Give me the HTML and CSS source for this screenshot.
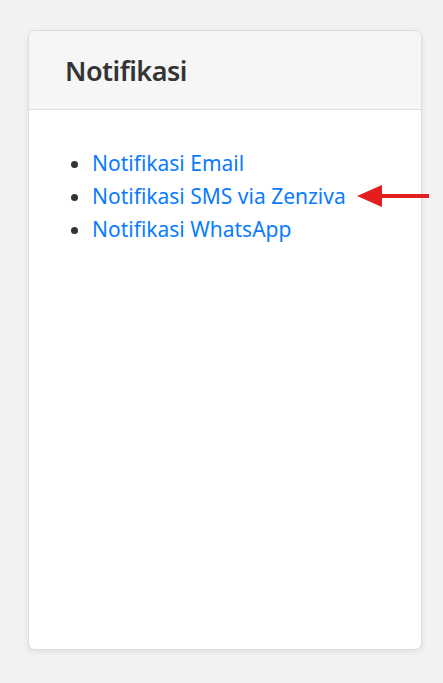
FILE: index.html
```html
<!DOCTYPE html>
<html lang="id">
<head>
<meta charset="utf-8">
<title>Notifikasi</title>
<link rel="stylesheet" href="styles.css">
</head>
<body>
<div class="page">
  <div class="card">
    <div class="card-header">
      <h3 class="card-title">Notifikasi</h3>
    </div>
    <div class="card-body">
      <ul class="links">
        <li><a href="#">Notifikasi Email</a></li>
        <li class="marked"><a href="#">Notifikasi SMS via Zenziva</a>
          <svg class="arrow" width="76" height="24" viewBox="0 0 76 24" aria-hidden="true">
            <path d="M0 12 L25 1 L25 10 L72 10 L72 14 L25 14 L25 23 Z" fill="#e41e1e"/>
          </svg>
        </li>
        <li><a href="#">Notifikasi WhatsApp</a></li>
      </ul>
    </div>
  </div>
</div>
</body>
</html>
```
FILE: styles.css
```css
html, body {
  margin: 0;
  padding: 0;
  background: #f2f2f2;
}
body {
  font-family: "Noto Sans", "Open Sans", sans-serif;
}
.page {
  padding: 30px 21px 32px 28px;
}
.card {
  height: 618px;
  background: #fff;
  border: 1px solid #dcdcdc;
  border-radius: 7px;
  box-shadow: 0 2px 6px rgba(0,0,0,0.08);
  display: flex;
  flex-direction: column;
}
.card-header {
  height: 78px;
  background: #f6f6f6;
  border-bottom: 1px solid #dddddd;
  border-radius: 7px 7px 0 0;
  display: flex;
  align-items: center;
  padding: 0 36px;
}
.card-title {
  margin: 0;
  font-size: 27px;
  font-weight: 600;
  letter-spacing: -0.5px;
  color: #343434;
}
.card-body {
  padding: 37px 0 0 0;
}
.links {
  margin: 0;
  padding-left: 63px;
  font-size: 21px;
  line-height: 33px;
  color: #333;
}
.links a {
  color: #0a7bff;
  text-decoration: none;
}
.marked {
  position: relative;
}
.arrow {
  position: absolute;
  left: 265px;
  top: 4px;
}
```
